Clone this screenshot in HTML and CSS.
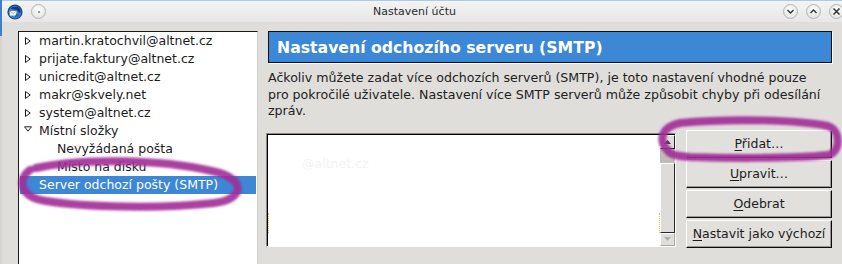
FILE: index.html
```html
<!DOCTYPE html>
<html lang="cs">
<head>
<meta charset="utf-8">
<title>Nastavení účtu</title>
<link rel="stylesheet" href="styles.css">
</head>
<body>
<div class="window">
  <div class="titlebar">
    <div class="tb-left">
      <svg class="app-icon" width="16" height="16" viewBox="0 0 16 16">
        <circle cx="8" cy="8" r="7.6" fill="#1b4a8a"/>
        <circle cx="8" cy="8.3" r="6.2" fill="#3f86d2"/>
        <path d="M3.6 4.6 C5.6 2.2 10.6 2 12.8 4.4 C14 5.8 13.8 8 12.6 9.4 L11.2 7.8 C10.6 6.2 8.6 5.2 6.6 5.6 Z" fill="#163a6e"/>
        <path d="M2.8 7 L9.4 7 L9.4 11.6 L2.8 11.6 Z" fill="#f5f5f5"/>
        <path d="M2.8 7 L6.1 9.6 L9.4 7" fill="none" stroke="#9a9a9a" stroke-width="0.7"/>
        <path d="M9.4 9.6 C10.8 10.6 12.2 10.4 12.8 9.6 C12.2 12.4 9.8 13.8 7.4 13.4 Z" fill="#2a62a8"/>
      </svg>
      <span class="tb-btn"><span class="tb-dot"></span></span>
    </div>
    <div class="tb-title">Nastavení účtu</div>
    <div class="tb-right">
      <span class="tb-btn"><svg width="9" height="9" viewBox="0 0 9 9"><path d="M1.5 3 L4.5 6 L7.5 3" fill="none" stroke="#333" stroke-width="1.4"/></svg></span>
      <span class="tb-btn"><svg width="9" height="9" viewBox="0 0 9 9"><path d="M1.5 6 L4.5 3 L7.5 6" fill="none" stroke="#333" stroke-width="1.4"/></svg></span>
      <span class="tb-btn"><svg width="9" height="9" viewBox="0 0 9 9"><path d="M1.5 1.5 L7.5 7.5 M7.5 1.5 L1.5 7.5" fill="none" stroke="#333" stroke-width="1.5"/></svg></span>
    </div>
  </div>

  <div class="content">
    <div class="tree">
      <div class="row l0"><svg class="twisty" width="6" height="8" viewBox="0 0 6 8"><path d="M0.5 0.5 L5.2 4 L0.5 7.5 Z" fill="#fff" stroke="#222" stroke-width="1"/></svg>martin.kratochvil@altnet.cz</div>
      <div class="row l0"><svg class="twisty" width="6" height="8" viewBox="0 0 6 8"><path d="M0.5 0.5 L5.2 4 L0.5 7.5 Z" fill="#fff" stroke="#222" stroke-width="1"/></svg>prijate.faktury@altnet.cz</div>
      <div class="row l0"><svg class="twisty" width="6" height="8" viewBox="0 0 6 8"><path d="M0.5 0.5 L5.2 4 L0.5 7.5 Z" fill="#fff" stroke="#222" stroke-width="1"/></svg>unicredit@altnet.cz</div>
      <div class="row l0"><svg class="twisty" width="6" height="8" viewBox="0 0 6 8"><path d="M0.5 0.5 L5.2 4 L0.5 7.5 Z" fill="#fff" stroke="#222" stroke-width="1"/></svg>makr@skvely.net</div>
      <div class="row l0"><svg class="twisty" width="6" height="8" viewBox="0 0 6 8"><path d="M0.5 0.5 L5.2 4 L0.5 7.5 Z" fill="#fff" stroke="#222" stroke-width="1"/></svg>system@altnet.cz</div>
      <div class="row l0 open"><svg class="twisty-down" width="8" height="6" viewBox="0 0 8 6"><path d="M0.5 0.8 L7.5 0.8 L4 5.2 Z" fill="#fff" stroke="#222" stroke-width="1"/></svg>Místní složky</div>
      <div class="row l1">Nevyžádaná pošta</div>
      <div class="row l1">Místo na disku</div>
      <div class="row leaf0 sel">Server odchozí pošty (SMTP)</div>
    </div>

    <div class="pane">
      <div class="header">Nastavení odchozího serveru (SMTP)</div>
      <p class="desc">Ačkoliv můžete zadat více odchozích serverů (SMTP), je toto nastavení vhodné pouze pro pokročilé uživatele. Nastavení více SMTP serverů může způsobit chyby při odesílání zpráv.</p>
      <div class="smtp-row">
        <div class="listbox">
          <div class="list-body">
            <span class="ghost">@altnet.cz</span>
            <span class="focus-mark left"></span>
            <span class="focus-mark right"></span>
          </div>
          <div class="scrollbar">
            <div class="sb-btn up"><svg width="7" height="4" viewBox="0 0 7 4"><path d="M0 4 L3.5 0 L7 4 Z" fill="#3a3a3a"/></svg></div>
            <div class="sb-trough"></div>
            <div class="sb-thumb"></div>
            <div class="sb-btn down"><svg width="7" height="4" viewBox="0 0 7 4"><path d="M0 0 L7 0 L3.5 4 Z" fill="#b0aeab"/></svg></div>
          </div>
        </div>
        <div class="buttons">
          <button class="btn"><u>P</u>řidat…</button>
          <button class="btn"><u>U</u>pravit…</button>
          <button class="btn"><u>O</u>debrat</button>
          <button class="btn"><u>N</u>astavit jako výchozí</button>
        </div>
      </div>
    </div>
  </div>
</div>

<svg class="marks" width="842" height="264" viewBox="0 0 842 264">
  <defs>
    <filter id="soft" x="-10%" y="-50%" width="120%" height="200%">
      <feGaussianBlur stdDeviation="1.3"/>
    </filter>
  </defs>
  <g fill="none" stroke="#a12f98" stroke-width="8" stroke-linecap="round" stroke-opacity="0.9" filter="url(#soft)">
    <path d="M36 168 C80 158 160 159 212 171 C246 178 246 199 214 203 C160 209 84 207 46 201 C18 197 18 178 30 170"/>
    <path d="M668 151 C658 140 661 127 680 123 C730 118 800 120 828 126 C841 130 841 152 828 155 C790 159 720 158 690 157 C676 156 668 154 668 150"/>
  </g>
</svg>
</body>
</html>
```

FILE: styles.css
```css
* {
  box-sizing: border-box;
}

html, body {
  margin: 0;
  padding: 0;
}

body {
  position: relative;
  width: 842px;
  height: 264px;
  overflow: hidden;
  background: #e0dedb;
  font-family: "DejaVu Sans", sans-serif;
  font-size: 12.5px;
  color: #1e1e1e;
}

.window {
  width: 842px;
  height: 264px;
  border-left: 2px solid #3a7fd0;
  border-image: linear-gradient(to bottom, #3a7fd0 0, #3a7fd0 37px, #d6d4d1 37px) 1;
}

/* title bar */
.titlebar {
  height: 22px;
  display: flex;
  align-items: center;
  background: linear-gradient(#f4f4f4, #e7e7e7);
  border-top: 1px solid #a8cbee;
}

.tb-left {
  display: flex;
  align-items: center;
  gap: 8px;
  padding-left: 5px;
  width: 44px;
  flex-shrink: 0;
}

.tb-title {
  flex: 1;
  text-align: center;
  font-size: 11px;
  color: #2a2a2a;
}

.tb-right {
  display: flex;
  align-items: center;
  gap: 8px;
  width: 59px;
  flex-shrink: 0;
}

.tb-btn {
  width: 15px;
  height: 15px;
  flex-shrink: 0;
  border-radius: 50%;
  border: 1px solid #b4b4b4;
  background: radial-gradient(circle at 50% 35%, #fdfdfd 0, #ebebeb 60%, #d9d9d9 100%);
  display: flex;
  align-items: center;
  justify-content: center;
}

.tb-dot {
  width: 2px;
  height: 2px;
  border-radius: 50%;
  background: #777;
}

/* content */
.content {
  display: flex;
  align-items: flex-start;
  padding: 9px 0 0 16px;
}

.tree {
  flex-shrink: 0;
  width: 240px;
  height: 240px;
  background: #fff;
  border-top: 1px solid #1a1a1a;
  border-left: 1px solid #1a1a1a;
  border-right: 1px solid #cfcfcf;
  padding: 0 1px;
}

.row {
  height: 18px;
  line-height: 18px;
  display: flex;
  align-items: center;
  white-space: nowrap;
  color: #1c1c1c;
}

.row.l0 {
  padding-left: 5px;
}

.row.l1 {
  padding-left: 37px;
}

.row.leaf0 {
  padding-left: 19px;
}

.row.sel {
  background: #3d87d5;
  color: #fff;
}

.twisty {
  margin-right: 8px;
  flex-shrink: 0;
}

.twisty-down {
  margin-left: -1px;
  margin-right: 7px;
  margin-top: -5px;
  flex-shrink: 0;
}

/* right pane */
.pane {
  margin-left: 10px;
  width: 564px;
  flex-shrink: 0;
}

.header {
  height: 32px;
  background: #3c87d6;
  border: 1px solid #0f0f0f;
  box-shadow: 1px 1px 0 #fbfbfb;
  color: #fff;
  font-weight: bold;
  font-size: 15.7px;
  line-height: 28px;
  padding: 2px 0 0 8px;
  white-space: nowrap;
}

.desc {
  margin: 7px 0 0 0;
  padding-right: 8px;
  font-size: 12.6px;
  line-height: 16.5px;
  color: #222;
}

.smtp-row {
  display: flex;
  align-items: flex-start;
  margin-top: 10px;
}

.listbox {
  margin-top: 3px;
  margin-left: -2px;
  width: 410px;
  height: 114px;
  display: flex;
  background: #fff;
  border-top: 1px solid #8a8a8a;
  border-left: 1px solid #8a8a8a;
  border-right: 1px solid #fdfdfd;
  border-bottom: 1px solid #fdfdfd;
  box-shadow: inset 1px 1px 0 #000;
}

.list-body {
  position: relative;
  flex: 1;
  padding: 22px 0 0 35px;
}

.ghost {
  color: #f3f3f3;
}

.focus-mark {
  position: absolute;
  top: 79px;
  height: 20px;
  border-left: 1px dotted #e6c34c;
}

.focus-mark.left {
  left: 1px;
}

.focus-mark.right {
  right: 0;
}

.scrollbar {
  width: 15px;
  display: flex;
  flex-direction: column;
  background: #d8d6d3;
  margin-top: 1px;
}

.sb-btn {
  height: 15px;
  display: flex;
  align-items: center;
  justify-content: center;
  background: #e0dedb;
  border-top: 1px solid #fff;
  border-left: 1px solid #fff;
  border-right: 1px solid #1c1c1c;
  border-bottom: 1px solid #1c1c1c;
}

.sb-btn.down {
  height: 13px;
  border-right-color: #a9a7a4;
  border-bottom-color: #a9a7a4;
}

.sb-trough {
  height: 14px;
  background: #bebcb9;
}

.sb-thumb {
  height: 70px;
  background: #dedcd9;
  border-top: 1px solid #fff;
  border-left: 1px solid #fff;
  border-right: 1px solid #262626;
  border-bottom: 1px solid #262626;
}

.buttons {
  margin-left: 10px;
  width: 146px;
  display: flex;
  flex-direction: column;
  gap: 2px;
}

.btn {
  font: inherit;
  color: #1c1c1c;
  width: 146px;
  height: 28px;
  margin: 0;
  padding: 0;
  background: #e2e0dd;
  border-top: 1px solid #fff;
  border-left: 1px solid #fff;
  border-right: 1px solid #0c0c0c;
  border-bottom: 1px solid #0c0c0c;
  box-shadow: inset -1px -1px 0 #9a9896;
  white-space: nowrap;
  text-align: center;
}

.btn u {
  text-underline-offset: 2px;
}

/* hand-drawn highlight marks */
.marks {
  position: absolute;
  left: 0;
  top: 0;
  pointer-events: none;
}
```
